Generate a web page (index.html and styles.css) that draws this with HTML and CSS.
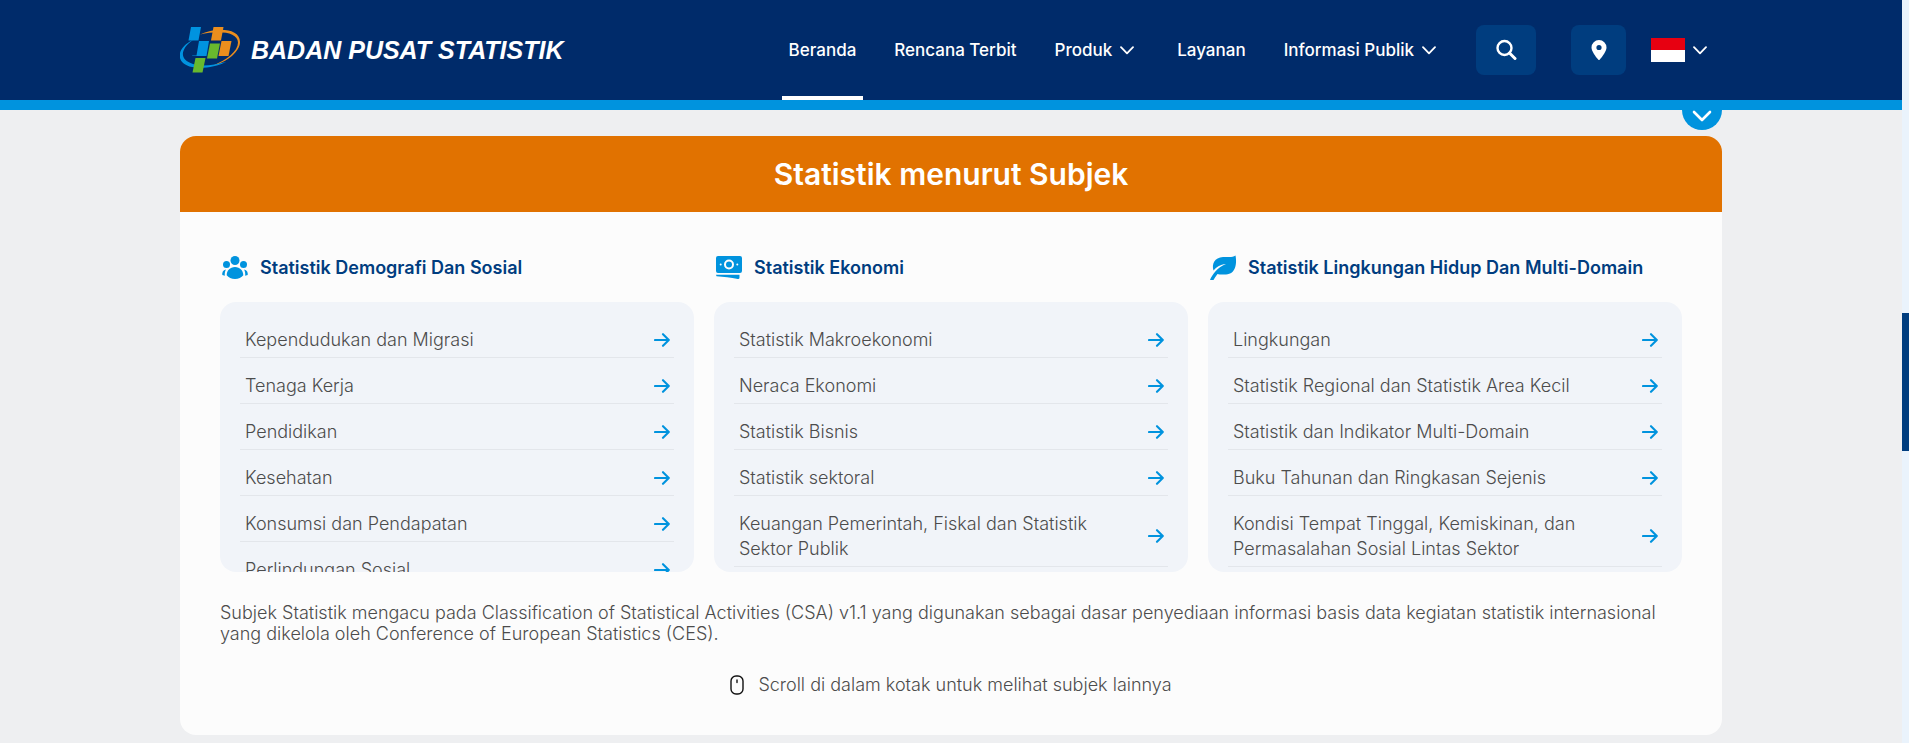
FILE: index.html
```html
<!DOCTYPE html>
<html lang="id">
<head>
<meta charset="utf-8">
<meta name="viewport" content="width=device-width, initial-scale=1">
<title>Badan Pusat Statistik</title>
<link rel="stylesheet" href="styles.css">
</head>
<body>
<svg class="sprite" aria-hidden="true">
  <symbol id="chevron" viewBox="0 0 14 9"><path d="M1 1.2 7 7.4 13 1.2" fill="none" stroke="currentColor" stroke-width="1.8" stroke-linecap="round" stroke-linejoin="round"/></symbol>
  <symbol id="arrow" viewBox="0 0 16 14"><path d="M1 7H14M9 1.2 14.8 7 9 12.8" fill="none" stroke="currentColor" stroke-width="2.1" stroke-linecap="round" stroke-linejoin="round"/></symbol>
</svg>
<div class="page">
  <div class="content">
    <header class="topbar">
      <div class="wrap topbar-inner">
        <a class="brand" href="#">
          <svg class="logo" viewBox="0 0 60 46" aria-hidden="true">
            <path d="M20 7.500C36 0 60 1 60 15C60 24 48 35 32 39C47 33 58 24 58 15.500C58 4.500 38 3 20 7.500Z" fill="#eb8e1e"/>
            <path d="M13 13C-3 20-6 36 12 40C22 42 36 40 46 35C34 38 22 40 13 37C-1 33 0 22 13 13Z" fill="#0093e0"/>
            <path d="M11 0H21L18.500 13.500H8.500Z" fill="#0093e0"/>
            <path d="M19 14H29L26.500 29H12L12.500 28.500H16.500Z" fill="#0093e0"/>
            <path d="M33.500 0H43.500L41 13.500H31Z" fill="#eb8e1e"/>
            <path d="M41.500 14H51.500L48.500 29H38.500Z" fill="#eb8e1e"/>
            <path d="M30 16.500H40L37 31.500H27Z" fill="#68b92e"/>
            <path d="M15.500 31H25.500L22.500 45.500H12.500Z" fill="#68b92e"/>
          </svg>
          <span>BADAN PUSAT STATISTIK</span>
        </a>
        <nav class="nav" aria-label="Utama">
          <a class="nav-link active" href="#" aria-current="page">Beranda</a>
          <a class="nav-link" href="#">Rencana Terbit</a>
          <button class="nav-link menu" type="button">Produk <svg class="chev"><use href="#chevron"/></svg></button>
          <a class="nav-link" href="#">Layanan</a>
          <button class="nav-link menu" type="button">Informasi Publik <svg class="chev"><use href="#chevron"/></svg></button>
        </nav>
        <div class="tools">
          <button class="tool search" type="button" aria-label="Cari">
            <svg width="22" height="22" viewBox="0 0 22 22"><circle cx="9.500" cy="9" r="7" fill="none" stroke="#fff" stroke-width="2.400"/><path d="M14.500 14 20 19.500" stroke="#fff" stroke-width="3" stroke-linecap="round"/></svg>
          </button>
          <button class="tool place" type="button" aria-label="Lokasi">
            <svg width="16" height="20" viewBox="0 0 16 20"><path fill="#fff" fill-rule="evenodd" d="M8 0a7.500 7.500 0 0 1 7.500 7.500C15.500 11 11.500 16.500 8.800 19.600a1 1 0 0 1-1.600 0C4.500 16.500.500 11 .500 7.500A7.500 7.500 0 0 1 8 0Zm0 4.900a2.600 2.600 0 1 0 0 5.200 2.600 2.600 0 0 0 0-5.200Z"/></svg>
          </button>
          <button class="lang" type="button" aria-label="Bahasa Indonesia">
            <span class="flag"></span><svg class="chev"><use href="#chevron"/></svg>
          </button>
        </div>
      </div>
    </header>
    <div class="band">
      <div class="wrap band-inner">
        <button class="drop" type="button" aria-label="Tampilkan lainnya"><svg class="drop-icon" viewBox="0 0 20 12"><path d="M2 2 10 10 18 2" fill="none" stroke="#fff" stroke-width="2.600" stroke-linecap="round" stroke-linejoin="round"/></svg></button>
      </div>
    </div>
    <main class="wrap card">
      <h1 class="card-title">Statistik menurut Subjek</h1>
      <div class="card-body">
        <div class="columns">
          <section>
            <h2 class="col-title">
              <svg class="col-icon" viewBox="0 0 28 28" fill="#0093de" aria-hidden="true"><circle cx="14" cy="7.500" r="4.500"/><circle cx="5.500" cy="11.500" r="3.500"/><circle cx="22.500" cy="11.500" r="3.500"/><path d="M14 14c5 0 8.300 3.600 8.300 8.300C20.500 24.500 17.500 26 14 26s-6.500-1.500-8.300-3.700C5.700 17.600 9 14 14 14ZM4.900 16.500C3.900 18.300 3.600 20.600 3.800 22.700L1.300 22C.900 19.500 1.900 17.200 4.900 16.500ZM23.100 16.500C24.100 18.300 24.400 20.600 24.200 22.700L26.700 22C27.100 19.500 26.100 17.200 23.100 16.500Z"/></svg>
              Statistik Demografi Dan Sosial
            </h2>
            <ul class="list" tabindex="0">
              <li><a href="#">Kependudukan dan Migrasi <svg class="arrow"><use href="#arrow"/></svg></a></li>
              <li><a href="#">Tenaga Kerja <svg class="arrow"><use href="#arrow"/></svg></a></li>
              <li><a href="#">Pendidikan <svg class="arrow"><use href="#arrow"/></svg></a></li>
              <li><a href="#">Kesehatan <svg class="arrow"><use href="#arrow"/></svg></a></li>
              <li><a href="#">Konsumsi dan Pendapatan <svg class="arrow"><use href="#arrow"/></svg></a></li>
              <li><a href="#">Perlindungan Sosial <svg class="arrow"><use href="#arrow"/></svg></a></li>
            </ul>
          </section>
          <section>
            <h2 class="col-title">
              <svg class="col-icon" viewBox="0 0 28 28" fill="#0093de" aria-hidden="true"><path fill-rule="evenodd" d="M3 3H25a2 2 0 0 1 2 2V18a2 2 0 0 1-2 2H3a2 2 0 0 1-2-2V5a2 2 0 0 1 2-2ZM14 6.500a5 5 0 1 0 0 10 5 5 0 0 0 0-10ZM5.700 10.500a1 1 0 1 0 0 2 1 1 0 0 0 0-2ZM22.300 10.500a1 1 0 1 0 0 2 1 1 0 0 0 0-2Z"/><circle cx="14" cy="11.500" r="3"/><path d="M1 21.800H24.500V24.500A1.500 1.500 0 0 1 22.800 26C15.500 24.500 9 23.700 1.500 23.300Z"/></svg>
              Statistik Ekonomi
            </h2>
            <ul class="list" tabindex="0">
              <li><a href="#">Statistik Makroekonomi <svg class="arrow"><use href="#arrow"/></svg></a></li>
              <li><a href="#">Neraca Ekonomi <svg class="arrow"><use href="#arrow"/></svg></a></li>
              <li><a href="#">Statistik Bisnis <svg class="arrow"><use href="#arrow"/></svg></a></li>
              <li><a href="#">Statistik sektoral <svg class="arrow"><use href="#arrow"/></svg></a></li>
              <li><a href="#">Keuangan Pemerintah, Fiskal dan Statistik Sektor Publik <svg class="arrow"><use href="#arrow"/></svg></a></li>
            </ul>
          </section>
          <section>
            <h2 class="col-title">
              <svg class="col-icon" viewBox="0 0 28 28" aria-hidden="true"><path fill="#0093de" d="M26.500 2.500C28 10 27 21 17 21.500C13 21.700 10 21.500 8.500 21C7 23 5.500 25 4.500 27H1C3 22 8 14.500 17 11C11 11.500 7 14.500 4.500 17.500C2.500 11 5.500 4.500 14 4C19 3.700 23 5 26.500 2.500Z"/></svg>
              Statistik Lingkungan Hidup Dan Multi-Domain
            </h2>
            <ul class="list" tabindex="0">
              <li><a href="#">Lingkungan <svg class="arrow"><use href="#arrow"/></svg></a></li>
              <li><a href="#">Statistik Regional dan Statistik Area Kecil <svg class="arrow"><use href="#arrow"/></svg></a></li>
              <li><a href="#">Statistik dan Indikator Multi-Domain <svg class="arrow"><use href="#arrow"/></svg></a></li>
              <li><a href="#">Buku Tahunan dan Ringkasan Sejenis <svg class="arrow"><use href="#arrow"/></svg></a></li>
              <li><a href="#">Kondisi Tempat Tinggal, Kemiskinan, dan Permasalahan Sosial Lintas Sektor <svg class="arrow"><use href="#arrow"/></svg></a></li>
            </ul>
          </section>
        </div>
        <p class="note">Subjek Statistik mengacu pada Classification of Statistical Activities (CSA) v1.1 yang digunakan sebagai dasar penyediaan informasi basis data kegiatan statistik internasional yang dikelola oleh Conference of European Statistics (CES).</p>
        <p class="hint">
          <svg width="14" height="20" viewBox="0 0 14 20" aria-hidden="true"><rect x="1" y="1" width="12" height="18" rx="5" fill="none" stroke="#111" stroke-width="1.400"/><path d="M7 5V7.500" stroke="#111" stroke-width="1.400" stroke-linecap="round"/></svg>
          Scroll di dalam kotak untuk melihat subjek lainnya
        </p>
      </div>
    </main>
  </div>
  <div class="track"><div class="thumb"></div></div>
</div>
</body>
</html>
```
FILE: styles.css
```css
* { box-sizing: border-box; }

body {
  margin: 0;
  background: #eeeff1;
  color: #4c4c4c;
  font: 300 18px/25px Inter, "Liberation Sans", sans-serif;
}

h1, h2, p, ul { margin: 0; padding: 0; }
a { color: inherit; text-decoration: none; }

button {
  border: 0;
  padding: 0;
  background: none;
  color: inherit;
  font: inherit;
  cursor: pointer;
}

.sprite { display: none; }

.page {
  display: flex;
  height: 100vh;
  overflow: hidden;
}

.content { flex: 1; }
.wrap { margin: 0 180px; }

.topbar {
  background: #002b6a;
  color: #fff;
}

.topbar-inner {
  display: flex;
  align-items: center;
  height: 100px;
}

.brand {
  display: flex;
  align-items: center;
  gap: 11px;
  margin-right: auto;
  font: italic bold 25px/30px "Liberation Sans", Arial, sans-serif;
  white-space: nowrap;
}

.logo {
  width: 60px;
  height: 46px;
}

.nav {
  display: flex;
  gap: 24px;
  height: 100px;
}

.nav-link {
  display: flex;
  align-items: center;
  gap: 8px;
  padding: 4px 7px 0;
  border-bottom: 4px solid transparent;
  font-size: 17px;
  font-weight: 500;
  white-space: nowrap;
}

.active { border-color: #fff; }
.menu { padding-right: 12px; }

.chev {
  width: 14px;
  height: 9px;
}

.tools {
  display: flex;
  align-items: center;
  margin: 0 15px 0 28px;
}

.tool {
  display: flex;
  align-items: center;
  justify-content: center;
  height: 50px;
  border-radius: 8px;
  background: #003d7f;
}

.search {
  width: 60px;
  margin-right: 35px;
}

.place {
  width: 55px;
  margin-right: 25px;
}

.lang {
  display: flex;
  align-items: center;
  gap: 8px;
}

.flag {
  width: 34px;
  height: 24px;
  background: linear-gradient(#e70011 50%, #fff 50%);
}

.band {
  height: 10px;
  background: #0093de;
}

.band-inner { position: relative; }

.drop {
  display: flex;
  justify-content: center;
  align-items: flex-start;
  position: absolute;
  top: 0;
  right: 0;
  width: 40px;
  height: 30px;
  padding-top: 10px;
  border-radius: 0 0 20px 20px;
  background: #0093de;
}

.drop-icon {
  width: 20px;
  height: 12px;
}

.card {
  margin-top: 26px;
  border-radius: 16px;
  background: #fcfcfc;
  overflow: hidden;
}

.card-title {
  padding: 18px;
  background: #e17200;
  color: #fff;
  font-size: 30px;
  font-weight: 600;
  line-height: 40px;
  text-align: center;
}

.card-body { padding: 40px; }

.columns {
  display: grid;
  grid-template-columns: repeat(3, 1fr);
  gap: 20px;
}

.col-title {
  display: flex;
  align-items: center;
  gap: 11px;
  height: 30px;
  margin-bottom: 20px;
  padding-left: 1px;
  color: #003d7f;
  font-size: 18px;
  font-weight: 600;
}

.col-icon {
  width: 28px;
  height: 28px;
}

.list {
  height: 270px;
  padding: 10px 20px;
  border-radius: 16px;
  background: #f1f4f9;
  list-style: none;
  overflow-y: auto;
  scrollbar-width: none;
}

.list a {
  display: flex;
  align-items: center;
  justify-content: space-between;
  gap: 48px;
  padding: 15px 4px 5px 5px;
  border-bottom: 1px solid #e3e6eb;
}

.arrow {
  flex: none;
  width: 16px;
  height: 14px;
  color: #0093de;
}

.note {
  margin-top: 30px;
  line-height: 21px;
}

.hint {
  display: flex;
  align-items: center;
  justify-content: center;
  gap: 14px;
  margin-top: 30px;
  line-height: 21px;
}

.track {
  width: 7px;
  padding-top: 313px;
  background: #eaf3fc;
}

.thumb {
  height: 138px;
  background: #003d7f;
}
```
